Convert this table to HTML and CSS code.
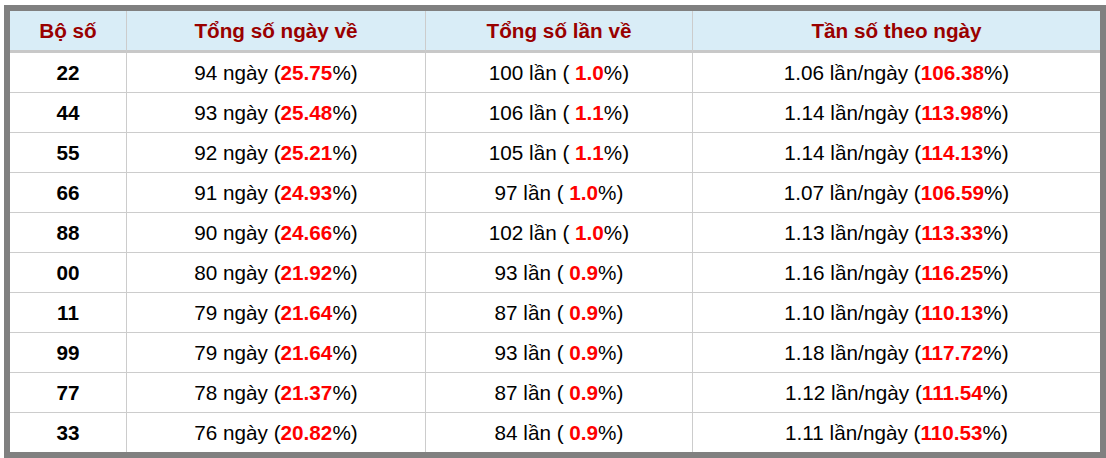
FILE: index.html
```html
<!DOCTYPE html>
<html lang="vi">
<head>
<meta charset="utf-8">
<link rel="stylesheet" href="styles.css">
</head>
<body>
<div class="frame">
<table class="stats">
<thead>
<tr><th class="c1">Bộ số</th><th class="c2">Tổng số ngày về</th><th class="c3">Tổng số lần về</th><th class="c4">Tần số theo ngày</th></tr>
</thead>
<tbody>
<tr><td class="num">22</td><td>94 ngày (<b>25.75</b>%)</td><td>100 lần ( <b>1.0</b>%)</td><td>1.06 lần/ngày (<b>106.38</b>%)</td></tr>
<tr><td class="num">44</td><td>93 ngày (<b>25.48</b>%)</td><td>106 lần ( <b>1.1</b>%)</td><td>1.14 lần/ngày (<b>113.98</b>%)</td></tr>
<tr><td class="num">55</td><td>92 ngày (<b>25.21</b>%)</td><td>105 lần ( <b>1.1</b>%)</td><td>1.14 lần/ngày (<b>114.13</b>%)</td></tr>
<tr><td class="num">66</td><td>91 ngày (<b>24.93</b>%)</td><td>97 lần ( <b>1.0</b>%)</td><td>1.07 lần/ngày (<b>106.59</b>%)</td></tr>
<tr><td class="num">88</td><td>90 ngày (<b>24.66</b>%)</td><td>102 lần ( <b>1.0</b>%)</td><td>1.13 lần/ngày (<b>113.33</b>%)</td></tr>
<tr><td class="num">00</td><td>80 ngày (<b>21.92</b>%)</td><td>93 lần ( <b>0.9</b>%)</td><td>1.16 lần/ngày (<b>116.25</b>%)</td></tr>
<tr><td class="num">11</td><td>79 ngày (<b>21.64</b>%)</td><td>87 lần ( <b>0.9</b>%)</td><td>1.10 lần/ngày (<b>110.13</b>%)</td></tr>
<tr><td class="num">99</td><td>79 ngày (<b>21.64</b>%)</td><td>93 lần ( <b>0.9</b>%)</td><td>1.18 lần/ngày (<b>117.72</b>%)</td></tr>
<tr><td class="num">77</td><td>78 ngày (<b>21.37</b>%)</td><td>87 lần ( <b>0.9</b>%)</td><td>1.12 lần/ngày (<b>111.54</b>%)</td></tr>
<tr><td class="num">33</td><td>76 ngày (<b>20.82</b>%)</td><td>84 lần ( <b>0.9</b>%)</td><td>1.11 lần/ngày (<b>110.53</b>%)</td></tr>
</tbody>
</table>
</div>
</body>
</html>
```
FILE: styles.css
```css
html, body {
  margin: 0;
  padding: 0;
  background: #ffffff;
}
body {
  padding: 5px 0 0 4px;
  font-family: "Liberation Sans", Arial, sans-serif;
}
.frame {
  width: 1090px;
  border: 6px solid #808080;
  background: #ffffff;
}
.stats {
  width: 1090px;
  border-collapse: separate;
  border-spacing: 0;
  table-layout: fixed;
  font-size: 20.7px;
  color: #000000;
}
.stats th, .stats td {
  box-sizing: border-box;
  padding: 0;
  text-align: center;
  border-right: 1px solid #cccccc;
  vertical-align: middle;
}
.stats th:last-child, .stats td:last-child {
  border-right: none;
}
.stats th {
  height: 42px;
  background: #d9edf7;
  color: #990000;
  font-weight: bold;
  border-bottom: 3px solid #c8c8c8;
}
.stats td {
  height: 40px;
  border-bottom: 1px solid #cccccc;
}
.stats tbody tr:last-child td {
  height: 39px;
  border-bottom: none;
}
.c1 { width: 117px; }
.c2 { width: 299px; }
.c3 { width: 267px; }
.c4 { width: 407px; }
.stats td.num {
  font-weight: bold;
}
.stats td b {
  color: #ff0000;
  font-weight: bold;
}
```
